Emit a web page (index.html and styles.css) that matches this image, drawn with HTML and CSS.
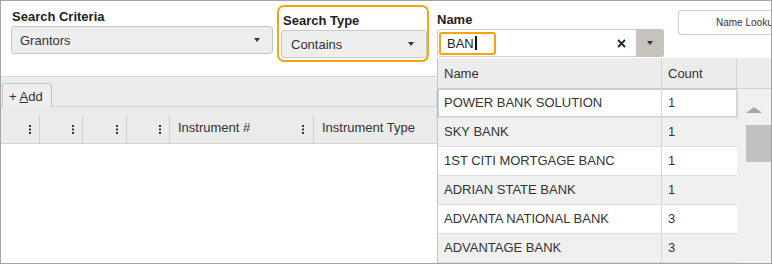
FILE: index.html
```html
<!DOCTYPE html>
<html lang="en">
<head>
    <meta charset="UTF-8">
    <meta name="viewport" content="width=device-width, initial-scale=1.0">
    <title>Name Search</title>
    <link rel="stylesheet" href="styles.css">
</head>
<body>

    <div class="app">
        <div class="criteria">
            <div class="field field-criteria">
                <label class="field-label">Search Criteria</label>
                <div class="select select-criteria"><span>Grantors</span><i class="caret"></i></div>
            </div>

            <div class="field field-type">
                <label class="field-label">Search Type</label>
                <div class="select select-type"><span>Contains</span><i class="caret"></i></div>
            </div>

            <div class="field field-name">
                <label class="field-label">Name</label>
                <div class="combo">
                    <div class="combo-input">
                        <span class="typed">BAN<span class="cursor"></span></span>
                        <svg class="clear" width="9" height="9" viewBox="0 0 9 9">
                            <path d="M1 1 L8 8 M8 1 L1 8" stroke="#222" stroke-width="1.8" fill="none"/>
                        </svg>
                    </div>
                    <div class="combo-toggle"><i class="caret"></i></div>
                </div>
            </div>

            <button class="lookup">Name Lookup</button>
        </div>

        <div class="toolbar">
            <button class="add-btn">+ <u>A</u>dd</button>
        </div>

        <div class="grid-head">
            <div class="col col-1"><svg class="kebab" width="2" height="9"><rect y="0" width="2" height="2"/><rect y="3.5" width="2" height="2"/><rect y="7" width="2" height="2"/></svg></div>
            <div class="col col-2"><svg class="kebab" width="2" height="9"><rect y="0" width="2" height="2"/><rect y="3.5" width="2" height="2"/><rect y="7" width="2" height="2"/></svg></div>
            <div class="col col-3"><svg class="kebab" width="2" height="9"><rect y="0" width="2" height="2"/><rect y="3.5" width="2" height="2"/><rect y="7" width="2" height="2"/></svg></div>
            <div class="col col-4"><svg class="kebab" width="2" height="9"><rect y="0" width="2" height="2"/><rect y="3.5" width="2" height="2"/><rect y="7" width="2" height="2"/></svg></div>
            <div class="col col-inst"><span>Instrument #</span><svg class="kebab" width="2" height="9"><rect y="0" width="2" height="2"/><rect y="3.5" width="2" height="2"/><rect y="7" width="2" height="2"/></svg></div>
            <div class="col col-type"><span>Instrument Type</span></div>
        </div>

        <div class="grid-body"></div>

        <!-- suggestion list opened under the Name box -->
        <div class="name-list">
            <div class="list-head">
                <div class="cell cell-name">Name</div>
                <div class="cell cell-count">Count</div>
            </div>
            <div class="list-body">
                <div class="rows">
                    <div class="row active"><div class="cell cell-name">POWER BANK SOLUTION</div><div class="cell cell-count">1</div></div>
                    <div class="row odd"><div class="cell cell-name">SKY BANK</div><div class="cell cell-count">1</div></div>
                    <div class="row"><div class="cell cell-name">1ST CITI MORTGAGE BANC</div><div class="cell cell-count">1</div></div>
                    <div class="row odd"><div class="cell cell-name">ADRIAN STATE BANK</div><div class="cell cell-count">1</div></div>
                    <div class="row"><div class="cell cell-name">ADVANTA NATIONAL BANK</div><div class="cell cell-count">3</div></div>
                    <div class="row odd"><div class="cell cell-name">ADVANTAGE BANK</div><div class="cell cell-count">3</div></div>
                </div>
                <div class="scrollbar">
                    <i class="scroll-up"></i>
                    <div class="scroll-thumb"></div>
                </div>
            </div>
        </div>
    </div>

</body>
</html>
```

FILE: styles.css
```css
body {
    margin: 0;
    padding: 0;
    font-family: "Liberation Sans", Arial, sans-serif;
    font-size: 13px;
    color: #333;
    background-color: #fff;
}

.app {
    position: relative;
    width: 772px;
    height: 264px;
    box-sizing: border-box;
    border: 1px solid #a4a4a4;
    overflow: hidden;
    display: flex;
    flex-direction: column;
}

/* top search row */
.criteria {
    height: 76px;
    flex-shrink: 0;
    box-sizing: border-box;
    border-bottom: 1px solid #d9d9d9;
    display: flex;
    align-items: flex-start;
}

.field {
    display: flex;
    flex-direction: column;
}

.field-label {
    font-weight: bold;
    font-size: 13px;
    line-height: 15px;
    color: #222;
    margin-bottom: 2px;
}

.field-criteria {
    margin: 8px 0 0 10px;
}

.field-criteria .field-label {
    padding-left: 1px;
}

.field-type {
    margin: 4px 0 0 4px;
    width: 152px;
    box-sizing: border-box;
    border: 2px solid #f5a514;
    border-radius: 7px;
    padding: 6px 0 2px 2px;
}

.field-type .field-label {
    padding-left: 2px;
}

.field-name {
    margin: 11px 0 0 8px;
}

.select {
    height: 28px;
    box-sizing: border-box;
    border: 1px solid #c9c9c9;
    border-radius: 3px;
    background-color: #eeeeee;
    display: flex;
    align-items: center;
    justify-content: space-between;
    padding: 0 12px 0 8px;
    font-size: 13px;
    color: #333;
}

.select-criteria {
    width: 262px;
}

.select-type {
    width: 146px;
    padding-left: 9px;
}

.caret {
    display: block;
    width: 0;
    height: 0;
    border-left: 3.5px solid transparent;
    border-right: 3.5px solid transparent;
    border-top: 4px solid #333;
}

.combo {
    width: 227px;
    height: 28px;
    display: flex;
}

.combo-input {
    flex: 1;
    box-sizing: border-box;
    border: 1px solid #cfcfcf;
    border-right: none;
    border-radius: 3px 0 0 3px;
    background-color: #fff;
    display: flex;
    align-items: center;
    justify-content: space-between;
    padding: 0 10px 0 1px;
}

.typed {
    display: flex;
    align-items: center;
    height: 19px;
    width: 47px;
    border: 2px solid #f5a514;
    border-radius: 3px;
    padding-left: 6px;
    font-size: 13px;
    color: #222;
}

.cursor {
    display: inline-block;
    width: 2px;
    height: 14px;
    margin-left: 1px;
    background-color: #111;
}

.combo-toggle {
    width: 28px;
    background-color: #c8c2bd;
    border-radius: 0 3px 3px 0;
    display: flex;
    align-items: center;
    justify-content: center;
}

.lookup {
    flex-shrink: 0;
    margin: 9px 0 0 14px;
    width: 94px;
    height: 25px;
    box-sizing: border-box;
    border: 1px solid #cdcdcd;
    border-right: none;
    border-radius: 4px 0 0 4px;
    background-color: #fff;
    text-align: left;
    white-space: nowrap;
    padding: 0 0 0 37px;
    font-family: "Liberation Sans", Arial, sans-serif;
    font-size: 10px;
    color: #333;
}

/* grid toolbar */
.toolbar {
    height: 30px;
    flex-shrink: 0;
    box-sizing: border-box;
    border-bottom: 1px solid #d3d3d3;
    background-color: #ececec;
    display: flex;
    align-items: flex-start;
    padding: 6px 0 0 1px;
}

.add-btn {
    width: 50px;
    height: 26px;
    box-sizing: border-box;
    border: 1px solid #c4c4c4;
    border-radius: 3px;
    background-color: #efefef;
    padding: 0 0 0 6px;
    text-align: left;
    font-family: "Liberation Sans", Arial, sans-serif;
    font-size: 13px;
    color: #333;
}

.grid-head {
    height: 37px;
    flex-shrink: 0;
    box-sizing: border-box;
    border-bottom: 1px solid #d3d3d3;
    background-color: #ebebeb;
    padding-top: 8px;
    display: flex;
}

.col {
    box-sizing: border-box;
    border-right: 1px solid #cfcfcf;
    display: flex;
    align-items: center;
    justify-content: flex-end;
    padding: 0 8px 3px 8px;
    color: #333;
}

.col-1 { width: 39px; }
.col-2 { width: 43px; }
.col-3 { width: 44px; }
.col-4 { width: 43px; }

.col-inst {
    width: 144px;
    justify-content: space-between;
    padding-right: 9px;
}

.col-type {
    flex: 1;
    border-right: none;
    justify-content: flex-start;
}

.kebab {
    fill: #333;
    margin-top: 4px;
}

.grid-body {
    flex: 1;
    background-color: #fff;
}

/* dropdown list */
.name-list {
    position: absolute;
    left: 436px;
    top: 57px;
    right: 0;
    bottom: 0;
    border-left: 1px solid #c6c6c6;
    background-color: #f0f0f0;
    display: flex;
    flex-direction: column;
}

.list-head {
    height: 31px;
    flex-shrink: 0;
    box-sizing: border-box;
    border-bottom: 1px solid #d2d2d2;
    background-color: #ececec;
    display: flex;
}

.cell {
    box-sizing: border-box;
    display: flex;
    align-items: center;
    padding-left: 6px;
    color: #333;
    font-size: 13px;
}

.cell-name {
    width: 224px;
    border-right: 1px solid #d6d6d6;
}

.cell-count {
    width: 75px;
}

.list-head .cell-count {
    border-right: 1px solid #d6d6d6;
}

.list-body {
    flex: 1;
    display: flex;
}

.rows {
    width: 299px;
}

.row {
    height: 29px;
    box-sizing: border-box;
    border-bottom: 1px solid #dcdcdc;
    background-color: #fff;
    display: flex;
}

.row.odd {
    background-color: #f0f0f0;
}

.row.active {
    box-shadow: inset 0 0 0 1px #d0d0d0, 0 1px 3px rgba(0, 0, 0, 0.18);
}

.row .cell {
    padding-bottom: 1px;
}

.scrollbar {
    flex: 1;
    display: flex;
    flex-direction: column;
    padding-left: 9px;
}

.scroll-up {
    display: block;
    width: 0;
    height: 0;
    margin-top: 18px;
    border-left: 8px solid transparent;
    border-right: 8px solid transparent;
    border-bottom: 6px solid #a6a6a6;
}

.scroll-thumb {
    margin-top: 12px;
    height: 37px;
    background-color: #c1c1c1;
}
```
